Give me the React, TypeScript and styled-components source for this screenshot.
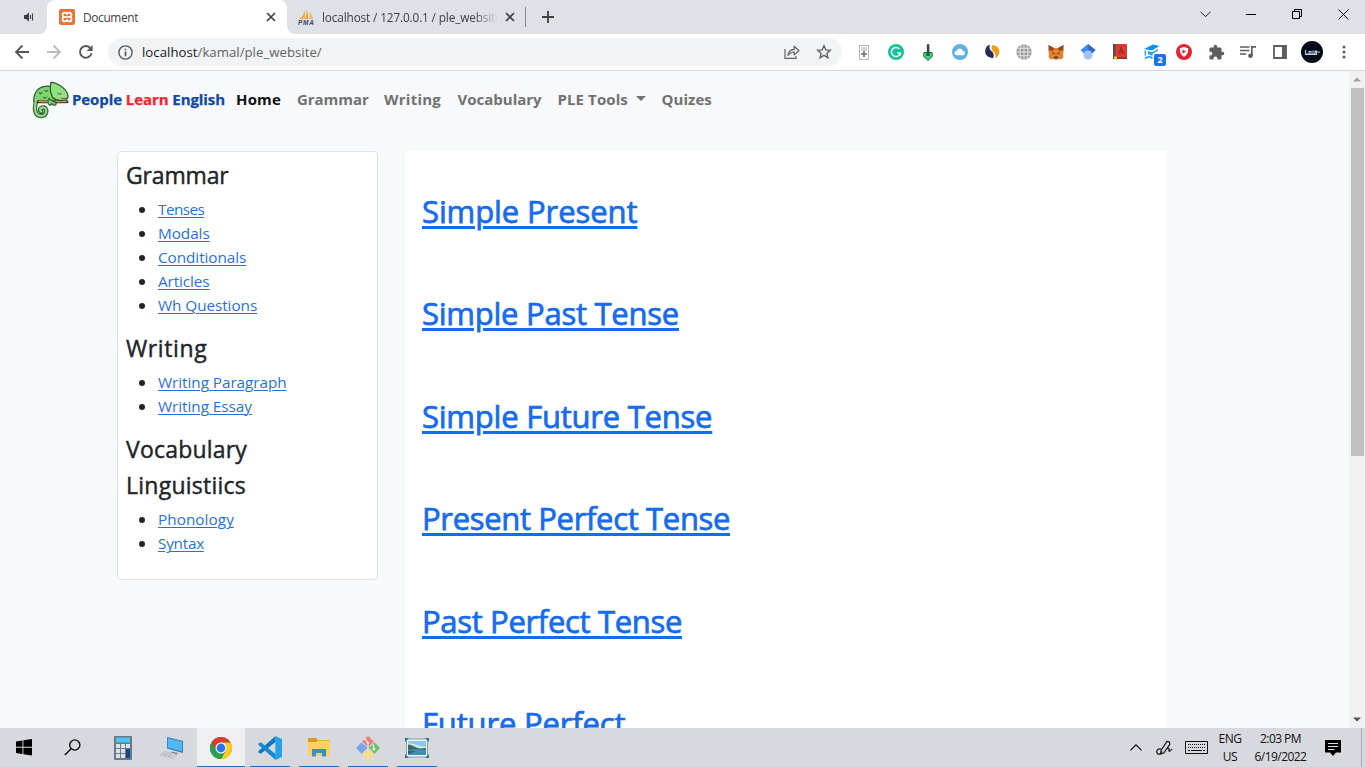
import React from "react";
import styled, { createGlobalStyle, css } from "styled-components";

const GlobalStyle = createGlobalStyle`
  * { box-sizing: border-box; }
  html, body { margin: 0; padding: 0; overflow: hidden; }
  body { font-family: "Open Sans", "Noto Sans", sans-serif; color: #212529; }
`;

const Screen = styled.div`
  width: 1365px;
  height: 767px;
  display: flex;
  flex-direction: column;
  overflow: hidden;
  background: #f8f9fa;
`;

/* ---------- browser: tab strip ---------- */

const TabStrip = styled.div`
  height: 34px;
  flex: none;
  display: flex;
  background: #dee1e6;
  font-size: 11.8px;
  color: #3c4043;
`;

const PinnedTab = styled.div`
  width: 47px;
  display: flex;
  align-items: center;
  padding-left: 23px;
  border-bottom-right-radius: 8px;
  background: #dee1e6;
`;

const Tab = styled.div<{ $active?: boolean }>`
  width: ${(p) => (p.$active ? 240 : 238)}px;
  display: flex;
  align-items: center;
  padding: 0 ${(p) => (p.$active ? 11 : 10)}px 0 ${(p) => (p.$active ? 12 : 11)}px;
  background: ${(p) => (p.$active ? "#fff" : "#dee1e6")};
  border-radius: ${(p) => (p.$active ? "8px 8px 0 0" : "0 0 0 8px")};
`;

const TabsUnderlay = styled.div`
  display: flex;
  background: linear-gradient(#dee1e6 50%, #fff 50%);
`;

const TabTitle = styled.span<{ $fade?: boolean }>`
  flex: 1;
  margin-left: ${(p) => (p.$fade ? 7 : 8)}px;
  margin-right: ${(p) => (p.$fade ? 7 : 6)}px;
  margin-top: -1px;
  overflow: hidden;
  white-space: nowrap;
  letter-spacing: ${(p) => (p.$fade ? "-0.14px" : "-0.3px")};
  ${(p) =>
    p.$fade &&
    css`
      mask-image: linear-gradient(to right, #000 86%, transparent);
    `}
`;

const TabDivider = styled.div`
  width: 1px;
  height: 20px;
  align-self: center;
  background: #80868b;
`;

const NewTab = styled.div`
  width: 44px;
  display: flex;
  align-items: center;
  justify-content: center;
`;

const WindowControls = styled.div`
  margin-left: auto;
  margin-right: -1px;
  display: flex;
`;

const WindowButton = styled.div`
  width: 46px;
  height: 28px;
  display: flex;
  align-items: center;
  justify-content: center;
`;

/* ---------- browser: toolbar ---------- */

const Toolbar = styled.div`
  height: 37px;
  flex: none;
  display: flex;
  align-items: center;
  background: #fff;
  border-bottom: 1px solid #d5d7db;
  padding-left: 6px;
`;

const ToolSlot = styled.div`
  width: 32px;
  height: 32px;
  flex: none;
  position: relative;
  display: flex;
  align-items: center;
  justify-content: center;
`;

const AddressBar = styled.div`
  width: 734px;
  height: 28px;
  margin-left: 6px;
  margin-right: 6px;
  display: flex;
  align-items: center;
  padding: 0 2px 0 10px;
  border-radius: 14px;
  background: #f1f3f4;
`;

const Url = styled.span`
  flex: 1;
  margin-left: 9px;
  font-size: 13.2px;
  letter-spacing: 0.03px;
  color: #5f6368;
  white-space: nowrap;
  b { font-weight: 400; color: #202124; }
`;

const ExtBadge = styled.span`
  position: absolute;
  left: 18px;
  top: 18px;
  width: 12px;
  height: 12px;
  border-radius: 2px;
  background: #1a73e8;
  color: #fff;
  font-size: 9px;
  font-weight: 700;
  line-height: 12px;
  text-align: center;
`;

/* ---------- web page ---------- */

const Viewport = styled.div`
  height: 657px;
  flex: none;
  display: flex;
  overflow: hidden;
  background: #f8f9fb;
`;

const Page = styled.div`
  width: 1349px;
  height: 657px;
  overflow: hidden;
`;

const Navbar = styled.nav`
  height: 56px;
  display: flex;
  align-items: center;
  padding-left: 32px;
`;

const Brand = styled.a`
  width: 196px;
  display: flex;
  align-items: center;
  padding-top: 2px;
  color: #0d4aa6;
  font: 700 15px "Open Sans", sans-serif;
  letter-spacing: -0.08px;
  -webkit-text-stroke: 0.25px currentColor;
  white-space: nowrap;
  svg { margin-right: 2px; flex: none; }
  em { font-style: normal; color: #f5222d; }
  span { margin-top: -3px; }
`;

const NavLink = styled.a<{ $active?: boolean; $w: number; $ls?: number }>`
  width: ${(p) => p.$w + 16}px;
  padding: 0 0 1px 8px;
  display: flex;
  align-items: center;
  font-size: 15px;
  font-weight: 700;
  white-space: nowrap;
  letter-spacing: ${(p) => p.$ls ?? 0}px;
  color: ${(p) => (p.$active ? "#101214" : "#707172")};
`;

const Caret = styled.i`
  margin-left: 8px;
  border: 5px solid transparent;
  border-top-color: #707172;
  border-bottom: 0;
`;

const Columns = styled.div`
  display: flex;
  align-items: flex-start;
  gap: 28px;
  padding: 24px 0 0 117px;
`;

const SideCard = styled.aside`
  width: 261px;
  padding: 9px 8px 7px;
  background: #fff;
  border: 1px solid #dee2e6;
  border-radius: 4px;
`;

const SideTitle = styled.h4<{ $ls?: number }>`
  margin: 0 0 8px;
  font-size: 23px;
  font-weight: 400;
  line-height: 28.8px;
  -webkit-text-stroke: 0.45px currentColor;
  letter-spacing: ${(p) => p.$ls ?? 0}px;
`;

const SideList = styled.ul`
  margin: -1px 0 17px;
  padding: 0 0 0 13px;
  list-style: none;
  font-size: 15.3px;
  line-height: 24px;
  li { display: flex; align-items: center; }
  li::before {
    content: "";
    width: 6px;
    height: 6px;
    margin-top: 2px;
    margin-right: 13px;
    border-radius: 50%;
    background: #212529;
  }
`;

const SideLink = styled.a<{ $ls?: number }>`
  color: #1f72e0;
  text-decoration: underline;
  text-decoration-thickness: 1px;
  text-underline-offset: 2px;
  letter-spacing: ${(p) => p.$ls ?? 0}px;
`;

const Lessons = styled.main`
  width: 760px;
  height: 640px;
  padding: 41px 16px 0;
  background: #fff;
`;

const Lesson = styled.h2`
  margin: 0 0 64px;
  font-size: 31px;
  font-weight: 400;
  line-height: 38.4px;
  -webkit-text-stroke: 0.75px currentColor;
  color: #176bee;
`;

const LessonLink = styled.a<{ $ls: number }>`
  text-decoration: underline;
  text-decoration-thickness: 3px;
  text-underline-offset: 3px;
  letter-spacing: ${(p) => p.$ls}px;
`;

const Scrollbar = styled.div`
  width: 16px;
  display: flex;
  flex-direction: column;
  align-items: center;
  background: #f1f1f1;
`;

const ScrollArrow = styled.div`
  height: 17px;
  display: flex;
  align-items: center;
`;

const ScrollThumb = styled.div`
  width: 13px;
  height: 368px;
  margin-left: 1px;
  margin-bottom: auto;
  background: #c1c1c1;
`;

/* ---------- taskbar ---------- */

const Taskbar = styled.footer`
  height: 39px;
  flex: none;
  display: flex;
  background: #d8d8df;
  color: #111;
`;

const TaskButton = styled.div<{ $state?: "active" | "open"; $ml?: number }>`
  width: 48px;
  margin-left: ${(p) => p.$ml ?? 0}px;
  display: flex;
  align-items: center;
  justify-content: center;
  background-color: ${(p) => (p.$state === "active" ? "#efeff3" : "transparent")};
  ${(p) =>
    p.$state &&
    css`
      background-image: linear-gradient(#1173bf, #1173bf);
      background-repeat: no-repeat;
      background-position: bottom center;
      background-size: ${p.$state === "active" ? "48px" : "40px"} 1px;
    `}
`;

const Tray = styled.div`
  margin-left: auto;
  display: flex;
  align-items: center;
`;

const TrayItem = styled.div<{ $w: number }>`
  width: ${(p) => p.$w}px;
  display: flex;
  justify-content: center;
  align-items: center;
`;

const TrayText = styled.div<{ $w: number; $ls: number }>`
  width: ${(p) => p.$w}px;
  text-align: center;
  font-size: 12px;
  line-height: 18px;
  padding-top: 1px;
  white-space: nowrap;
  letter-spacing: ${(p) => p.$ls}px;
`;

const ShowDesktop = styled.div`
  width: 4px;
  height: 39px;
  border-left: 1px solid #a6a6ad;
`;

/* ---------- drawings ---------- */

const Close = () => (
  <svg width="10" height="10" viewBox="0 0 10 10"><path d="M1 1l8 8M9 1l-8 8" stroke="#3c4043" strokeWidth="1.7" /></svg>
);

const Xampp = () => (
  <svg width="16" height="16" viewBox="0 0 16 16">
    <rect width="16" height="16" rx="2" fill="#e27533" />
    <path d="M8 5.800C8 4.200 7.200 3.600 5.800 3.600 3 3.600 2.800 7.400 5.200 7.800 2.800 8.400 3 12.400 5.800 12.400 7.200 12.400 8 11.600 8 10.200M8 5.800C8 4.200 8.800 3.600 10.200 3.600 13 3.600 13.200 7.400 10.800 7.800 13.200 8.400 13 12.400 10.200 12.400 8.800 12.400 8 11.600 8 10.200" fill="none" stroke="#fff" strokeWidth="1.700" />
    <path d="M5 8h6" stroke="#fff" strokeWidth="1.600" />
  </svg>
);

const Pma = () => (
  <svg width="17" height="16" viewBox="0 0 17 16">
    <path d="M7 1v9H1.500C4 8 6 5 7 1z" fill="#f6a94b" />
    <path d="M8.500 0c1 3 2 7 1.500 10H7.500C8.500 7 8.800 3 8.500 0z" fill="#f89c0e" />
    <path d="M11.500 3c2 2 3 5 3.500 7h-4c.8-2 .9-4 .5-7z" fill="#f7b45f" />
    <text x="0" y="15.500" fontFamily="Liberation Sans" fontSize="6.500" fontWeight="700" fontStyle="italic" fill="#3f4173" textLength="16">PMA</text>
  </svg>
);

const Chameleon = () => (
  <svg width="38" height="38" viewBox="0 0 38 38">
    <path d="M4.500 20C1.500 27 3 35 9 35c6 0 7-7.500 2.500-8.500-3.300-.6-4.300 2.800-2.200 4" fill="none" stroke="#2c5636" strokeWidth="4.400" strokeLinecap="round" />
    <path d="M2 21.500C.8 13 5.500 6 13 5.300c3-.4 5 .2 8 1.200l3 14z" fill="#7fd46e" stroke="#2c5636" strokeWidth="1.200" />
    <path d="M4.500 19C1.500 27 3 35 9 35c6 0 7-7.500 2.500-8.500-3.300-.6-4.300 2.800-2.200 4" fill="none" stroke="#90dd82" strokeWidth="2.300" strokeLinecap="round" />
    <path d="M6 20.800h29" stroke="#3a3a28" strokeWidth="3" strokeLinecap="round" />
    <path d="M6.500 20.500h28" stroke="#d09a62" strokeWidth="1.500" />
    <path d="M19 1.200c6.500.8 13.500 5 16.500 11.300 1.300 3.500.3 6-2.500 6.700-4 .7-9 .2-12.500-2.700-2-4.500-3-9.500-1.500-15.300z" fill="#8fe37e" stroke="#2c5636" strokeWidth="1.200" strokeLinejoin="round" />
    <path d="M17 17.500c-1.800 2.500-1.200 6 .8 6.600 1.400.3 2-.8 1.700-1.800 1.200 2.200 4 2.700 4.700.7.200-1.500-1.200-2.300-3-2.600z" fill="#7fd46e" stroke="#2c5636" strokeWidth="1.100" />
    <path d="M7 11.500l1.500 1.200 1.800-1.200M12.500 9.200l1.700 1.200 1.700-1.200M11 16.200l1.800 1 1.800-1.200" fill="none" stroke="#2f6a3c" strokeWidth="1.100" />
    <path d="M25.500 12c1.300 1.500 2.800 1.500 4 .3" fill="none" stroke="#2c5636" strokeWidth="1" />
    <circle cx="31.500" cy="14.800" r="1.900" fill="#efb09c" />
    <path d="M29 17.300c2 .5 4 .3 6-.5" fill="none" stroke="#2c5636" strokeWidth=".8" />
  </svg>
);

const Reload = () => (
  <svg width="16" height="16" viewBox="0 0 16 16">
    <path d="M13.600 9.300A5.900 5.900 0 1 1 12.300 4" fill="none" stroke="#54585c" strokeWidth="1.900" />
    <path d="M14.600 1v6H8.600z" fill="#54585c" />
  </svg>
);

const Arrow = ({ flip, color }: { flip?: boolean; color: string }) => (
  <svg width="16" height="16" viewBox="0 0 16 16">
    <path d={flip ? "M1 8h12.500M7.500 1.500L14 8l-6.500 6.500" : "M15 8H2.500M8.500 1.500L2 8l6.500 6.500"} fill="none" stroke={color} strokeWidth="1.800" />
  </svg>
);

const ext: React.ReactNode[] = [
  <svg width="10" height="15" viewBox="0 0 10 15"><rect x=".5" y=".5" width="9" height="14" fill="#fff" stroke="#b5b5b5" /><path d="M2 3h6M2 5h6" stroke="#aaa" /><path d="M5 6v6M2 9h6" stroke="#707070" strokeWidth="1.700" /></svg>,
  <svg width="16" height="16" viewBox="0 0 16 16"><circle cx="8" cy="8" r="8" fill="#15c39a" /><path d="M11.300 5A4.500 4.500 0 1 0 12.300 9H9.300M12.300 8.500v3" fill="none" stroke="#fff" strokeWidth="1.400" /></svg>,
  <svg width="12" height="17" viewBox="0 0 12 17"><path d="M2 8.500h8c1.500 3 0 5-4 7.800C2 13.500.5 11.500 2 8.500z" fill="#32d977" stroke="#39584a" /><path d="M4 9.500h4v2.500H4z" fill="#24713f" /><rect x="4.800" y="0" width="2.600" height="10" rx="1" fill="#3e4649" /></svg>,
  <svg width="16" height="16" viewBox="0 0 16 16"><circle cx="8" cy="8" r="8" fill="#5eb2e0" /><path d="M4.500 11.200a2.100 2.100 0 0 1 0-4.200 3.300 3.300 0 0 1 6.300-.2 2.300 2.300 0 0 1 .7 4.400z" fill="#fff" /></svg>,
  <svg width="15" height="14" viewBox="0 0 15 14"><path d="M5 0C1-.2-.8 6 .8 9.200 2.400 12.300 6 12.600 8 13.200c1.800-3.600.2-5.600-1.600-7.200S4 2.200 5 0z" fill="#252e5b" /><path d="M7 .3C10 0 14 2 14.400 6c.3 4-2.400 6.400-4.400 7 .6-2 .8-4-1.200-6S6 3 7 .3z" fill="#f29b16" /></svg>,
  <svg width="16" height="16" viewBox="0 0 16 16"><circle cx="8" cy="8" r="7.700" fill="#9b9b9b" /><path d="M8 0v16M0 8h16M1.500 4.300h13M1.500 11.700h13M5.500.8C3.500 5 3.500 11 5.500 15.200M10.500.8c2 4.200 2 10.200 0 14.400" fill="none" stroke="#eee" strokeWidth=".9" /></svg>,
  <svg width="16" height="15" viewBox="0 0 16 15"><path d="M.5 0L6 3h4l5.500-3 .3 5-.8 4 .5 3-2 2.500-3-.8-1.500 1H7l-1.500-1-3 .8L.5 12 1 9 .2 5z" fill="#e6812c" /><path d="M.5 0L6 3 5 6 1 5zM15.500 0L10 3l1 3 4-1z" fill="#8f4b20" /><path d="M3.500 7.500l3 .5v1.500zM12.500 7.500l-3 .5v1.500z" fill="#4b3730" /><path d="M6 11.500h4v1.800H6z" fill="#4b3730" /></svg>,
  <svg width="16" height="16" viewBox="0 0 16 16"><path d="M8 0l7.500 6L12 9.500H4L.5 6z" fill="#4285f4" /><path d="M8 0l7.500 6L12 9.500 8 5z" fill="#356ac3" /><circle cx="8" cy="11" r="4.600" fill="#a0c3ff" /></svg>,
  <svg width="14" height="16" viewBox="0 0 14 16"><rect width="14" height="15" rx="1" fill="#d63e32" /><path d="M0 0h2.500v15H0z" fill="#5a4a48" /><path d="M.5 13.500H14V15H.5z" fill="#8b3028" /><path d="M5.500 10.500l2.700-7 2.700 7M6.300 8h4" fill="none" stroke="#a92820" strokeWidth="1.300" /><path d="M1 12.500h3V16l-1.500-1L1 16z" fill="#f2c23b" /></svg>,
  <><svg width="16" height="16" viewBox="0 0 16 16"><path d="M0 5l9-4.500L15.500 2 8 6.500z" fill="#0d91e2" /><path d="M3.800 7l4.500 1.300L14 5v1.500L8.500 10v2L3.800 10zM.6 6l1.400 1v4L.6 12z" fill="#25a0ea" /><path d="M1 14.500c3-2.500 6-2 7.500 0" stroke="#25a0ea" fill="none" strokeWidth="1.800" /></svg><ExtBadge>2</ExtBadge></>,
  <svg width="16" height="16" viewBox="0 0 16 16"><circle cx="8" cy="8" r="8" fill="#e3212f" /><path d="M8 3l4.200 1.300c.3 4-1 6.700-4.200 8.700-3.200-2-4.500-4.700-4.200-8.700z" fill="#fff" /><path d="M6.500 5.500l3.500 2-3.500 2.300z" fill="#e3212f" /></svg>,
  <svg width="17" height="17" viewBox="0 0 24 24"><path d="M20.500 11H19V7a2 2 0 0 0-2-2h-4V3.500a2.500 2.500 0 0 0-5 0V5H4a2 2 0 0 0-2 2v3.800h1.500a2.700 2.700 0 0 1 0 5.400H2V20a2 2 0 0 0 2 2h3.800v-1.500a2.700 2.700 0 0 1 5.400 0V22H17a2 2 0 0 0 2-2v-4h1.500a2.500 2.500 0 0 0 0-5z" fill="#5b5f63" /></svg>,
  <svg width="16" height="14" viewBox="0 0 16 14"><path d="M0 2h9.500M0 5.500h9.500M0 9h6" stroke="#5b5f63" strokeWidth="1.600" /><path d="M11 1h5v1.700h-3.300V11H11z" fill="#5b5f63" /><circle cx="10.500" cy="10.800" r="2.300" fill="#5b5f63" /></svg>,
  <svg width="14" height="14" viewBox="0 0 14 14"><path d="M1 1h12v12H1z" fill="#fff" stroke="#5b5f63" strokeWidth="1.800" /><path d="M9 1h4v12H9z" fill="#5b5f63" /></svg>,
  <svg width="22" height="22" viewBox="0 0 22 22"><circle cx="11" cy="11" r="11" fill="#040a18" /><path d="M4.500 9v4H7M8 10.500h2V13H8zM12 9.500v3.500h2v-3h1.500v3" fill="none" stroke="#9fc4e8" strokeWidth="1.200" /><path d="M14 11h5M4 13.500h12" stroke="#e6dfe0" strokeWidth=".9" /></svg>,
  <svg width="4" height="14" viewBox="0 0 4 14"><circle cx="2" cy="2" r="1.500" fill="#5b5f63" /><circle cx="2" cy="7" r="1.500" fill="#5b5f63" /><circle cx="2" cy="12" r="1.500" fill="#5b5f63" /></svg>,
];

const WindowsLogo = () => (
  <svg width="16" height="17" viewBox="0 0 16 17"><path d="M0 2.500l6.500-1v6.300H0zM7.400 1.300L16 0v7.800H7.400zM0 8.700h6.500V15L0 14zM7.400 8.700H16v7.800l-8.600-1.300z" fill="#000" /></svg>
);
const Magnifier = () => (
  <svg width="17" height="17" viewBox="0 0 17 17"><circle cx="10.800" cy="6" r="5.100" fill="none" stroke="#111" strokeWidth="1.400" /><path d="M7.200 9.700L.8 16" stroke="#111" strokeWidth="1.500" /></svg>
);
const Calculator = () => (
  <svg width="18" height="24" viewBox="0 0 18 24"><rect width="18" height="24" rx="1" fill="#6b7985" /><rect x="2" y="1.500" width="14" height="5" fill="#46c8f1" /><path d="M2 8h4v4H2zM7 8h4v4H7zM12 8h4v4h-4zM2 13h4v4H2zM7 13h4v4H7zM2 18h4v4H2zM7 18h4v4H7z" fill="#dce3e8" /><path d="M12 13h4v9h-4z" fill="#14458d" /></svg>
);
const Computer = () => (
  <svg width="24" height="22" viewBox="0 0 24 22"><path d="M7 0l16 4v12L7 11.500z" fill="#2a7fbd" /><path d="M7.800 1.200l14.400 3.600v9.700L7.800 10.400z" fill="#55b8f4" /><path d="M13 14.500l5 1.500-1 1.200-6-1.700z" fill="#7d8a94" /><path d="M5 14.500l12 3.300-4 3.700L0 18z" fill="#d6dade" stroke="#a3abb1" strokeWidth=".5" /><path d="M3 15.800l11 3.200M2 17l11 3.200M7.500 15l-3 4M11 16l-3 4" stroke="#aab0b5" strokeWidth=".6" /></svg>
);
const Chrome = () => (
  <svg width="22" height="22" viewBox="0 0 22 22"><circle cx="11" cy="11" r="11" fill="#2b9e4b" /><path d="M11 11L1.470 5.500A11 11 0 0 1 20.530 5.500H11z" fill="#df3b2e" /><path d="M1.470 5.500L6.400 14 11 11V5.500z" fill="#df3b2e" /><path d="M11 5.500h9.530A11 11 0 0 1 11 22l5-8.500z" fill="#fbc91d" /><path d="M1.470 5.500L6.200 13.700 11 16.500l3.300-.8L11 22A11 11 0 0 1 1.470 5.500z" fill="#2b9e4b" /><circle cx="11" cy="11" r="5.500" fill="#fff" /><circle cx="11" cy="11" r="4.400" fill="#2c72e8" /></svg>
);
const VsCode = () => (
  <svg width="24" height="24" viewBox="0 0 24 24"><path d="M17.500 6L2.800 17.700.3 16.400v-1.200L17.500 0z" fill="#1277bd" /><path d="M17.500 18L2.800 6.300.3 7.600v1.200L17.500 24z" fill="#168bd3" /><path d="M17.300 0L24 3v18l-6.700 3z" fill="#27a0ea" /></svg>
);
const Folder = () => (
  <svg width="22" height="19" viewBox="0 0 22 19"><path d="M0 0h8l1.500 2H22v6H0z" fill="#d99a1f" /><path d="M0 4h8l2-1.500h12V18H0z" fill="#fcd160" /><path d="M4 18.500V11h14v7.500h-4V15H8v3.500z" fill="#338fd0" /></svg>
);
const GitIcon = () => (
  <svg width="24" height="24" viewBox="0 0 24 24"><g strokeWidth="1.500" strokeLinejoin="round"><path d="M12 1l4.700 4.500L12 10.300 7.300 5.500z" fill="#f07a77" stroke="#f07a77" /><path d="M5.500 7.300l5 4.700-5 4.700L1 12z" fill="#7ca5ef" stroke="#7ca5ef" /><path d="M18.500 7.300L23 12l-4.500 4.700L13.700 12z" fill="#72c168" stroke="#72c168" /><path d="M12 13.700l4.700 4.800L12 23l-4.700-4.500z" fill="#f9de85" stroke="#f9de85" /></g><path d="M8.500 2.500l3.500 4v4M17 8l1 4.500" fill="none" stroke="#e5e5ea" strokeWidth="1.300" /><circle cx="12" cy="7" r="1.300" fill="#e5e5ea" /><circle cx="17.800" cy="13" r="1.500" fill="#e5e5ea" /></svg>
);
const Picture = () => (
  <svg width="24" height="20" viewBox="0 0 24 20"><path d="M1.500 1h21v18h-21z" fill="#f1f6fa" stroke="#7da0b5" /><path d="M3 3h18v7H3z" fill="#8cc8ee" /><path d="M3 5c6 0 9 3 18 4v3H3z" fill="#d3e9f4" /><path d="M3 6.500c4 0 7 3 12 4 2 0 4-.5 6-.5v2H3z" fill="#3d6b5b" /><path d="M3 12c6-1 12-1 18 0v5H3z" fill="#3f8fb5" /><path d="M3 13h8l-8 3z" fill="#2f5f6a" /><path d="M0 0h4L0 4zM24 0v4l-4-4zM24 20h-4l4-4zM0 20v-4l4 4z" fill="#356f9c" /></svg>
);

/* ---------- content ---------- */

type Item = [label: string, spacing: number];

const groups: { title: Item; links: Item[] }[] = [
  {
    title: ["Grammar", -0.15],
    links: [["Tenses", -0.55], ["Modals", -0.05], ["Conditionals", -0.06], ["Articles", -0.1], ["Wh Questions", -0.06]],
  },
  { title: ["Writing", 0.6], links: [["Writing Paragraph", -0.05], ["Writing Essay", -0.05]] },
  { title: ["Vocabulary", 0.2], links: [] },
  { title: ["Linguistiics", 0.25], links: [["Phonology", 0.05], ["Syntax", -0.25]] },
];

const lessons: Item[] = [
  ["Simple Present", -0.1],
  ["Simple Past Tense", -0.25],
  ["Simple Future Tense", -0.23],
  ["Present Perfect Tense", -0.34],
  ["Past Perfect Tense", -0.33],
  ["Future Perfect", -0.16],
];

export default function App() {
  return (
    <Screen>
      <GlobalStyle />
      <TabStrip>
        <TabsUnderlay>
          <PinnedTab>
            <svg width="12" height="10" viewBox="0 0 12 10"><path d="M1 3h2l3-2.500v9L3 7H1z" fill="#3c4043" /><path d="M7.500 3v4M9.500 1.500v7" stroke="#3c4043" strokeWidth="1.100" /></svg>
          </PinnedTab>
          <Tab $active>
            <Xampp />
            <TabTitle>Document</TabTitle>
            <Close />
          </Tab>
          <Tab>
            <Pma />
            <TabTitle $fade>localhost / 127.0.0.1 / ple_website</TabTitle>
            <Close />
          </Tab>
        </TabsUnderlay>
        <TabDivider />
        <NewTab>
          <svg width="12" height="12" viewBox="0 0 12 12"><path d="M6 0v12M0 6h12" stroke="#3c4043" strokeWidth="1.800" /></svg>
        </NewTab>
        <WindowControls>
          <WindowButton><svg width="11" height="7" viewBox="0 0 11 7"><path d="M.5 .7l5 5 5-5" fill="none" stroke="#222" /></svg></WindowButton>
          <WindowButton><svg width="10" height="2" viewBox="0 0 10 2"><path d="M0 1.500h10" stroke="#000" /></svg></WindowButton>
          <WindowButton><svg width="10" height="10" viewBox="0 0 10 10"><path d="M.5 2.500h7v7h-7zM2.500 2.500v-2h7v7h-2" fill="none" stroke="#000" /></svg></WindowButton>
          <WindowButton><svg width="11" height="11" viewBox="0 0 11 11"><path d="M.5 .5l10 10M10.500 .5l-10 10" stroke="#111" /></svg></WindowButton>
        </WindowControls>
      </TabStrip>

      <Toolbar>
        <ToolSlot><Arrow color="#54585c" /></ToolSlot>
        <ToolSlot><Arrow flip color="#bbbdbf" /></ToolSlot>
        <ToolSlot><Reload /></ToolSlot>
        <AddressBar>
          <svg width="15" height="15" viewBox="0 0 15 15"><circle cx="7.500" cy="7.500" r="6.600" fill="none" stroke="#54585c" strokeWidth="1.400" /><path d="M7.500 6.500v4.700M7.500 3.700v1.600" stroke="#54585c" strokeWidth="1.600" /></svg>
          <Url><b>localhost</b>/kamal/ple_website/</Url>
          <ToolSlot><svg width="16" height="14" viewBox="0 0 16 14"><path d="M1 4v9.300h11V11" fill="none" stroke="#5f6368" strokeWidth="1.200" /><path d="M4 10.500C4.500 6.500 7 4.500 10.200 4.300V1.200L15 5.700l-4.800 4.200V7C7.500 7 5.800 8 4 10.500z" fill="none" stroke="#5f6368" strokeWidth="1.200" strokeLinejoin="round" /></svg></ToolSlot>
          <ToolSlot><svg width="16" height="16" viewBox="0 0 16 16"><path d="M8 1.800l1.800 4.100 4.500.4-3.400 3 1 4.400L8 11.400l-3.900 2.300 1-4.400-3.400-3 4.500-.4z" fill="none" stroke="#5f6368" strokeWidth="1.400" /></svg></ToolSlot>
        </AddressBar>
        {ext.map((icon, i) => (
          <ToolSlot key={i}>{icon}</ToolSlot>
        ))}
      </Toolbar>

      <Viewport>
        <Page>
          <Navbar>
            <Brand>
              <Chameleon />
              <span>People <em>Learn</em> English</span>
            </Brand>
            <NavLink $active $w={45} $ls={0.15}>Home</NavLink>
            <NavLink $w={71} $ls={-0.05}>Grammar</NavLink>
            <NavLink $w={57.5} $ls={0.25}>Writing</NavLink>
            <NavLink $w={84}>Vocabulary</NavLink>
            <NavLink $w={88} $ls={0.1}>PLE Tools<Caret /></NavLink>
            <NavLink $w={51} $ls={0.05}>Quizes</NavLink>
          </Navbar>
          <Columns>
            <SideCard>
              {groups.map((g) => (
                <React.Fragment key={g.title[0]}>
                  <SideTitle $ls={g.title[1]}>{g.title[0]}</SideTitle>
                  {g.links.length > 0 && (
                    <SideList>
                      {g.links.map(([label, ls]) => (
                        <li key={label}><SideLink $ls={ls}>{label}</SideLink></li>
                      ))}
                    </SideList>
                  )}
                </React.Fragment>
              ))}
            </SideCard>
            <Lessons>
              {lessons.map(([label, ls]) => (
                <Lesson key={label}><LessonLink $ls={ls}>{label}</LessonLink></Lesson>
              ))}
            </Lessons>
          </Columns>
        </Page>
        <Scrollbar>
          <ScrollArrow><svg width="8" height="5" viewBox="0 0 8 5"><path d="M0 4.500L4 .5l4 4z" fill="#a0a0a0" /></svg></ScrollArrow>
          <ScrollThumb />
          <ScrollArrow><svg width="8" height="5" viewBox="0 0 8 5"><path d="M0 .5l4 4 4-4z" fill="#505050" /></svg></ScrollArrow>
        </Scrollbar>
      </Viewport>

      <Taskbar>
        <TaskButton><WindowsLogo /></TaskButton>
        <TaskButton><Magnifier /></TaskButton>
        <TaskButton $ml={3}><Calculator /></TaskButton>
        <TaskButton $ml={1}><Computer /></TaskButton>
        <TaskButton $ml={1} $state="active"><Chrome /></TaskButton>
        <TaskButton $ml={1} $state="open"><VsCode /></TaskButton>
        <TaskButton $ml={1} $state="open"><Folder /></TaskButton>
        <TaskButton $ml={1} $state="open"><GitIcon /></TaskButton>
        <TaskButton $ml={1} $state="open"><Picture /></TaskButton>
        <Tray>
          <TrayItem $w={26}><svg width="12" height="7" viewBox="0 0 12 7"><path d="M.5 6.300L6 .8l5.500 5.500" fill="none" stroke="#111" strokeWidth="1.200" /></svg></TrayItem>
          <TrayItem $w={30}><svg width="17" height="16" viewBox="0 0 17 16"><path d="M5 10.500L11 1.500l2.500.5.2 2.500-6 8.500-3 1zM5 9c-4-1-5 3-3.500 4.500S5 14 6 11.500M10 9.500c2-2 3.500-1.500 3 .5s1 1.500 3-1" fill="none" stroke="#111" strokeWidth="1.200" /></svg></TrayItem>
          <TrayItem $w={34}><svg width="23" height="13" viewBox="0 0 23 13"><path d="M.5 .5h22v12H.5z" fill="none" stroke="#111" /><path d="M3 3.500h18M3 6.500h18" stroke="#111" strokeDasharray="1 1" /><path d="M3 9.500h2M6 9.500h11M18 9.500h2" stroke="#111" /></svg></TrayItem>
          <TrayText $w={34} $ls={-0.5}>ENG<br />US</TrayText>
          <TrayText $w={67} $ls={-0.55}>2:03 PM<br />6/19/2022</TrayText>
          <TrayItem $w={38}><svg width="16" height="16" viewBox="0 0 16 16"><path d="M0 0h16v12.500h-5L8 16l-3-3.500H0z" fill="#000" /><path d="M3 3.500h10M3 6.500h10M3 9.500h6.500" stroke="#dcdce2" /></svg></TrayItem>
          <TrayItem $w={9} />
          <ShowDesktop />
        </Tray>
      </Taskbar>
    </Screen>
  );
}
